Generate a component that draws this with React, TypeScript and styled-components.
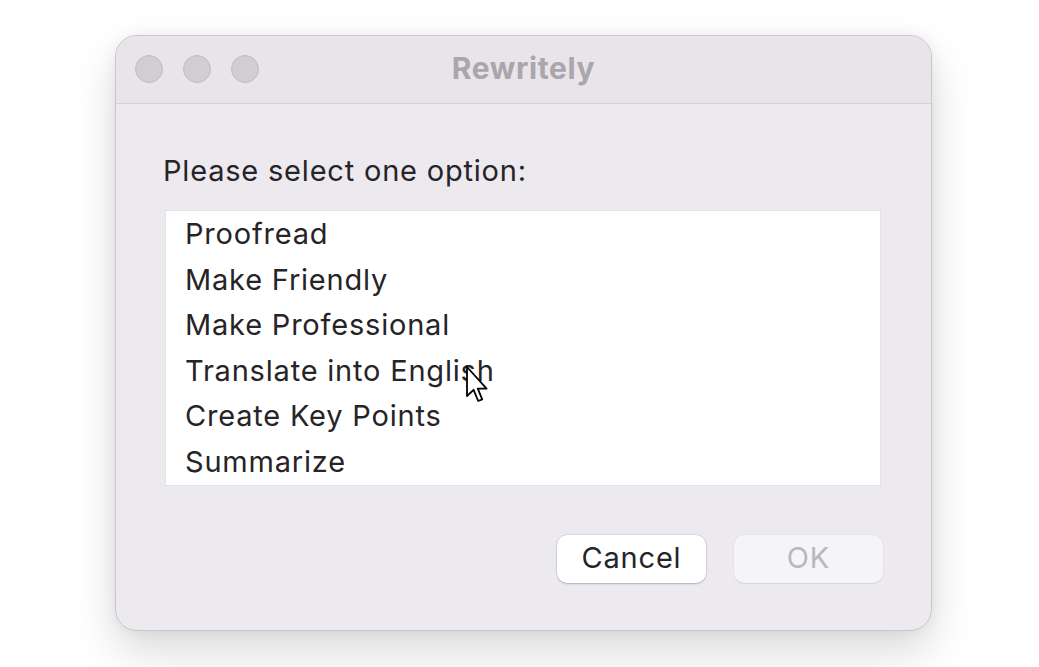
import styled, { createGlobalStyle } from 'styled-components'

const GlobalStyle = createGlobalStyle`
    html, body {
        margin: 0;
        padding: 0;
        background: #ffffff;
        font-family: Inter, "Noto Sans", "Liberation Sans", sans-serif;
    }
`

const Page = styled.div`
    width: 1039px;
    height: 667px;
    padding: 35px 0 0 115px;
    box-sizing: border-box;
    overflow: hidden;
`

const Window = styled.div`
    position: relative;
    width: 817px;
    height: 596px;
    box-sizing: border-box;
    background: #ece9ef;
    border: 1px solid #c9c6cc;
    border-radius: 22px;
    box-shadow: 0 20px 44px rgba(0, 0, 0, 0.15), 0 0 14px rgba(0, 0, 0, 0.06);
    overflow: hidden;
    display: flex;
    flex-direction: column;
`

const TitleBar = styled.div`
    position: relative;
    height: 68px;
    box-sizing: border-box;
    flex-shrink: 0;
    background: #e8e4ea;
    border-bottom: 1px solid #d3d0d6;
    display: flex;
    align-items: center;
    padding: 0 0 2px 19px;
    gap: 20px;
`

const Light = styled.div`
    width: 28px;
    height: 28px;
    border-radius: 50%;
    background: #d0cdd3;
    border: 1px solid #bebbc1;
    box-sizing: border-box;
`

const Title = styled.div`
    position: absolute;
    left: 0;
    right: 0;
    text-align: center;
    font-size: 30px;
    font-weight: 700;
    color: #a9a6ac;
    letter-spacing: 0.6px;
    padding-bottom: 2px;
`

const Body = styled.div`
    flex: 1;
    display: flex;
    flex-direction: column;
    padding: 0 48px 0 49px;
`

const Prompt = styled.div`
    margin: 50px 0 0 -2px;
    font-size: 29px;
    line-height: 34px;
    letter-spacing: 0.8px;
    color: #262427;
    white-space: nowrap;
`

const ListBox = styled.div`
    margin-top: 22px;
    margin-right: 2px;
    height: 276px;
    background: #ffffff;
    border: 1px solid #e3e1e6;
    box-sizing: border-box;
    padding: 0 0 0 19px;
    display: flex;
    flex-direction: column;
`

const Item = styled.div`
    height: 45.6px;
    line-height: 45.6px;
    font-size: 29px;
    letter-spacing: 0.8px;
    color: #262427;
    white-space: nowrap;
`

const ButtonRow = styled.div`
    margin-top: 49px;
    display: flex;
    justify-content: flex-end;
    gap: 28px;
`

const Button = styled.div<{ $disabled?: boolean }>`
    width: 149px;
    height: 48px;
    box-sizing: border-box;
    padding-bottom: 3px;
    border-radius: 10px;
    display: flex;
    align-items: center;
    justify-content: center;
    font-size: 29px;
    letter-spacing: 0.8px;
    background: ${p => (p.$disabled ? '#f5f4f7' : '#ffffff')};
    color: ${p => (p.$disabled ? '#b9b7bc' : '#262427')};
    box-shadow: ${p =>
        p.$disabled
            ? '0 0 0 0.5px rgba(0,0,0,0.06), 0 1px 1px rgba(0,0,0,0.06)'
            : '0 0 0 0.5px rgba(0,0,0,0.12), 0 1px 2px rgba(0,0,0,0.18)'};
`

const Cursor = styled.svg`
    position: absolute;
    left: 349px;
    top: 329px;
    width: 26px;
    height: 40px;
`

const options = [
    'Proofread',
    'Make Friendly',
    'Make Professional',
    'Translate into English',
    'Create Key Points',
    'Summarize',
]

const App = () => {
    return (
        <Page>
            <GlobalStyle />
            <Window>
                <TitleBar>
                    <Light />
                    <Light />
                    <Light />
                    <Title>Rewritely</Title>
                </TitleBar>

                <Body>
                    <Prompt>Please select one option:</Prompt>

                    <ListBox>
                        {options.map(o => (
                            <Item key={o}>{o}</Item>
                        ))}
                    </ListBox>

                    <ButtonRow>
                        <Button>Cancel</Button>
                        <Button $disabled>OK</Button>
                    </ButtonRow>
                </Body>

                <Cursor viewBox="0 0 13 20">
                    <path
                        d="M1 1 L1 15.5 L4.3 12.4 L6.6 18 L8.6 17.2 L6.4 11.8 L10.8 11.8 Z"
                        fill="#ffffff"
                        stroke="#000000"
                        strokeWidth="0.9"
                        strokeLinejoin="round"
                    />
                </Cursor>
            </Window>
        </Page>
    )
}

export default App
